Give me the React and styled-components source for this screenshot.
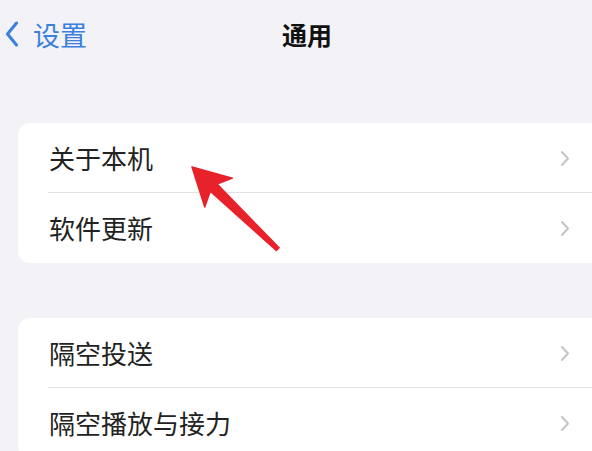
import React from "react";
import styled, { createGlobalStyle } from "styled-components";

const sections = [
  ["关于本机", "软件更新"],
  ["隔空投送", "隔空播放与接力"],
];

const App = () => {
  return (
    <Page>
      <GlobalStyle />
      <NavBar>
        <BackButton>
          <svg width="14" height="26" viewBox="0 0 14 26">
            <path
              d="M11.5 2 L2.5 13 L11.5 24"
              fill="none"
              stroke="#3b80dd"
              strokeWidth="3"
              strokeLinecap="round"
              strokeLinejoin="round"
            />
          </svg>
          <BackLabel>设置</BackLabel>
        </BackButton>
        <Title>通用</Title>
      </NavBar>

      {sections.map((rows, i) => (
        <Card key={i}>
          {rows.map((label, j) => (
            <Row key={label} $last={j === rows.length - 1}>
              <Label>{label}</Label>
              <svg width="10" height="17" viewBox="0 0 10 17">
                <path
                  d="M2 2 L8 8.5 L2 15"
                  fill="none"
                  stroke="#c5c5c9"
                  strokeWidth="2"
                  strokeLinecap="round"
                  strokeLinejoin="round"
                />
              </svg>
            </Row>
          ))}
        </Card>
      ))}

      {/* red annotation arrow pointing at 关于本机 */}
      <Arrow width="110" height="100" viewBox="0 0 110 100">
        <polygon
          points="12,7 52.4,18.1 37.1,24.1 99.1,87.7 96.3,90.5 30.2,31.3 24.8,46.9"
          fill="#e8222b"
          stroke="#e8222b"
          strokeWidth="1.5"
          strokeLinejoin="round"
        />
      </Arrow>
    </Page>
  );
};

const GlobalStyle = createGlobalStyle`
  body {
    margin: 0;
    background: #f2f2f7;
    overflow: hidden;
    font-family: "Noto Sans CJK SC", "Noto Sans", sans-serif;
  }
`;

const Page = styled.div`
  position: relative;
  width: 592px;
  height: 451px;
  overflow: hidden;
  background: #f2f2f7;
`;

const NavBar = styled.div`
  display: grid;
  grid-template-columns: 282px auto;
  align-items: center;
  height: 68px;
`;

const BackButton = styled.div`
  display: flex;
  align-items: center;
  gap: 14px;
  padding-left: 5px;
  color: #3b80dd;
`;

const BackLabel = styled.span`
  font-size: 27px;
  line-height: 1;
`;

const Title = styled.div`
  font-size: 25px;
  font-weight: 700;
  color: #111;
  line-height: 1;
`;

const Card = styled.div`
  margin: 55px -30px 0 18px;
  background: #fff;
  border-radius: 12px;
  overflow: hidden;
`;

const Row = styled.div`
  position: relative;
  display: flex;
  align-items: center;
  justify-content: space-between;
  height: 70px;
  padding: 0 52px 0 31px;

  &::after {
    content: "";
    display: ${(p) => (p.$last ? "none" : "block")};
    position: absolute;
    left: 30px;
    right: 0;
    bottom: 0;
    height: 1px;
    background: #e2e2e6;
  }
`;

const Label = styled.span`
  font-size: 26px;
  color: #222;
  line-height: 1;
`;

const Arrow = styled.svg`
  position: absolute;
  left: 180px;
  top: 160px;
`;

export default App;
